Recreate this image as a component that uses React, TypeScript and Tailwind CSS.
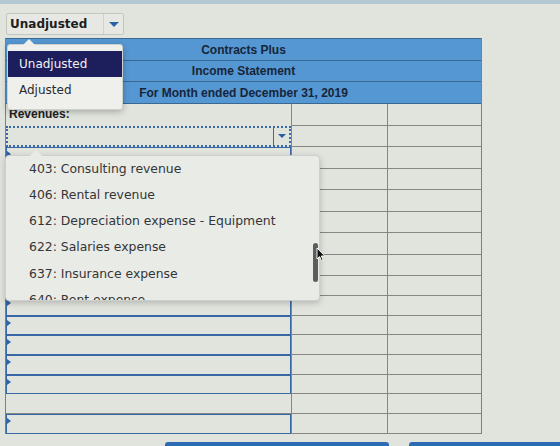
import React from "react";

type RowKind = "label" | "select" | "input" | "blank";
type Row = { kind: RowKind; h: string };

const accounts = [
  "403: Consulting revenue",
  "406: Rental revenue",
  "612: Depreciation expense - Equipment",
  "622: Salaries expense",
  "637: Insurance expense",
  "640: Rent expense",
];

// statement body rows, heights written out so tailwind picks them up
const rows: Row[] = [
  { kind: "label", h: "h-[21.5px]" },
  { kind: "select", h: "h-[21.5px]" },
  { kind: "input", h: "h-[21.5px]" },
  { kind: "input", h: "h-[21.5px]" },
  { kind: "input", h: "h-[21.5px]" },
  { kind: "input", h: "h-[21.5px]" },
  { kind: "input", h: "h-[21.5px]" },
  { kind: "input", h: "h-[21.5px]" },
  { kind: "input", h: "h-[20px]" },
  { kind: "input", h: "h-[19.7px]" },
  { kind: "input", h: "h-[19.7px]" },
  { kind: "input", h: "h-[19.7px]" },
  { kind: "input", h: "h-[19.7px]" },
  { kind: "input", h: "h-[19.7px]" },
  { kind: "blank", h: "h-[19.7px]" },
  { kind: "input", h: "h-[19.7px]" },
];

const Marker = () => (
  <span className="absolute left-0 top-[3px] h-0 w-0 border-y-[3px] border-l-[4px] border-y-transparent border-l-[#2d63a8]" />
);

function FirstCell({ kind }: { kind: RowKind }) {
  if (kind === "label") {
    return (
      <div className="w-[285px] pl-[3px] pt-[1px] text-[12px] font-bold text-[#1e1f22]">
        Revenues:
      </div>
    );
  }
  if (kind === "select") {
    return (
      <div className="relative flex w-[285px] border-2 border-dotted border-[#3c6aa6]">
        <div className="flex-1" />
        <div className="flex w-[16px] items-center justify-center border-l border-[#3c6aa6]">
          <span className="h-0 w-0 border-x-[4px] border-t-[4px] border-x-transparent border-t-[#2a5d9f]" />
        </div>
      </div>
    );
  }
  if (kind === "blank") {
    return <div className="w-[285px] border-b border-[#858784]" />;
  }
  return (
    <div className="relative w-[285px] border border-[#3767a5]">
      <Marker />
    </div>
  );
}

function BodyRow({ kind, h }: Row) {
  return (
    <div className={`flex ${h}`}>
      <FirstCell kind={kind} />
      <div className="w-[96px] border-b border-l border-[#858784]" />
      <div className="flex-1 border-b border-l border-[#858784]" />
    </div>
  );
}

function HeaderRow({ text, h }: { text: string; h: string }) {
  return (
    <div
      className={`flex ${h} items-center justify-center border-b border-[#3a6890] bg-[#5597d2] text-[12px] font-bold text-[#17253a]`}
    >
      {text}
    </div>
  );
}

// small mouse pointer resting on the list's scrollbar
const Pointer = () => (
  <svg
    className="absolute left-[316px] top-[247px]"
    width="10"
    height="15"
    viewBox="0 0 10 15"
  >
    <path
      d="M1 1 L1 12 L3.6 9.6 L5.4 13.6 L7 12.9 L5.3 9 L8.8 9 Z"
      fill="#111"
      stroke="#f4f4f4"
      strokeWidth="1"
      strokeLinejoin="round"
    />
  </svg>
);

export default function App() {
  return (
    <div className="relative h-[446px] w-[560px] overflow-hidden bg-[#e1e3dd] font-['Liberation_Sans',Arial,sans-serif]">
      <div className="h-[4px] bg-[#b5c7d3]" />

      {/* balance type picker */}
      <div className="ml-[6px] mt-[9px] flex h-[22px] w-[118px] rounded-[2px] border border-[#c3c5c1] bg-[#e7e8e4]">
        <div className="flex flex-1 items-center pl-[3px] font-['DejaVu_Sans',sans-serif] text-[12px] font-bold text-[#1c1d20]">
          Unadjusted
        </div>
        <div className="flex w-[20px] items-center justify-center border-l border-[#cfd1cd]">
          <span className="h-0 w-0 border-x-[5px] border-t-[5px] border-x-transparent border-t-[#2a62a8]" />
        </div>
      </div>

      {/* statement grid */}
      <div className="ml-[5px] mt-[3px] w-[477px] border-x border-[#7d7f7c]">
        <div className="border-t border-[#3a6890]">
          <HeaderRow text="Contracts Plus" h="h-[22px]" />
          <HeaderRow text="Income Statement" h="h-[21px]" />
          <HeaderRow text="For Month ended December 31, 2019" h="h-[22px]" />
        </div>
        {rows.map((r, i) => (
          <BodyRow key={i} kind={r.kind} h={r.h} />
        ))}
      </div>

      <div className="mt-[8px] flex gap-[20px] pl-[165px]">
        <div className="h-[10px] w-[224px] rounded-t-[3px] bg-[#2d6bb2]" />
        <div className="h-[10px] flex-1 rounded-tl-[3px] bg-[#2d6bb2]" />
      </div>

      {/* open picker menu */}
      <div className="absolute left-[7px] top-[44px] w-[116px] rounded-[3px] border border-[#cfd1cc] bg-[#eff0ec] py-[6px] font-['DejaVu_Sans',sans-serif] text-[12px] shadow-[0_2px_6px_rgba(0,0,0,0.25)]">
        <span className="absolute -top-[6px] left-[15px] h-0 w-0 border-x-[6px] border-b-[6px] border-x-transparent border-b-[#eff0ec]" />
        <div className="flex h-[26px] items-center bg-[#1d1f5c] pl-[11px] text-[#f1f1f4]">
          Unadjusted
        </div>
        <div className="flex h-[26px] items-center pl-[11px] text-[#2b2c2e]">
          Adjusted
        </div>
      </div>

      {/* account list */}
      <div className="absolute left-[5px] top-[155px] h-[146px] w-[315px] rounded-[4px] border border-[#cdcfca] bg-[#e9ebe6] shadow-[0_2px_6px_rgba(0,0,0,0.2)]">
        <span className="absolute -top-[6px] left-[24px] h-0 w-0 border-x-[6px] border-b-[6px] border-x-transparent border-b-[#e9ebe6]" />
        <div className="h-full overflow-hidden font-['DejaVu_Sans',sans-serif] text-[12.4px] text-[#343537]">
          {accounts.map((a) => (
            <div key={a} className="flex h-[26.2px] items-center pl-[23px]">
              {a}
            </div>
          ))}
        </div>
        <div className="absolute right-[1px] top-[87px] h-[39px] w-[5px] rounded-full bg-[#5c5e5c]" />
      </div>

      <Pointer />
    </div>
  );
}
